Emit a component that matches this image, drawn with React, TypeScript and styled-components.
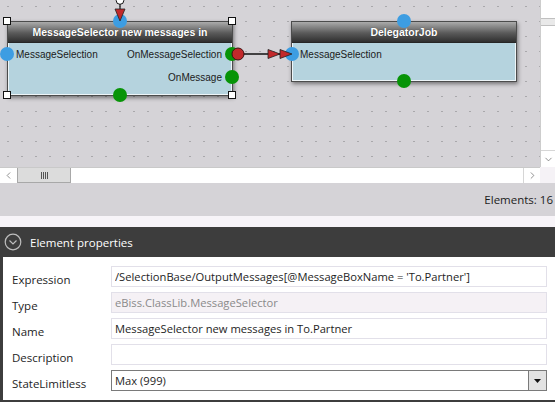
import React from "react";
import styled, { createGlobalStyle } from "styled-components";
import { ChevronDown, ChevronLeft, ChevronRight } from "lucide-react";

const uiFont = `"Open Sans", "Noto Sans", sans-serif`;
const diagramFont = `"Liberation Sans", Arial, sans-serif`;

const GlobalStyle = createGlobalStyle`
  html, body {
    margin: 0;
    padding: 0;
    background: #fff;
  }
  * {
    box-sizing: border-box;
  }
`;

const Page = styled.div`
  width: 555px;
  height: 402px;
  display: flex;
  flex-direction: column;
  overflow: hidden;
  font-family: ${uiFont};
`;

// ---- designer surface ----

const Designer = styled.div`
  display: grid;
  grid-template-columns: 540px 15px;
  grid-template-rows: 167px 16px;
  background: #d5d3d7;
`;

const Canvas = styled.div`
  position: relative;
  overflow: hidden;
  background-color: #d5d3d7;
  background-image: conic-gradient(at 2px 1px, transparent 75%, #a9a8ab 0);
  background-size: 14px 15px;
  background-position: 7px 6px;
`;

const Node = styled.div<{ $x: number; $y: number; $w: number; $h: number }>`
  position: absolute;
  left: ${(p) => p.$x}px;
  top: ${(p) => p.$y}px;
  width: ${(p) => p.$w}px;
  height: ${(p) => p.$h}px;
  display: flex;
  flex-direction: column;
  border: 1px solid #4c4c4c;
  background: #b5d3de;
  box-shadow: 1px 2px 4px rgba(0, 0, 0, 0.45);
`;

const NodeTitle = styled.div`
  flex: none;
  height: 21px;
  display: flex;
  align-items: center;
  justify-content: center;
  background: linear-gradient(#ababab, #5a5a5a 55%, #2f2f2f);
  border-bottom: 1px solid #262626;
  color: #fff;
  font: bold 10.5px ${diagramFont};
  text-shadow: 0 0 1px rgba(0, 0, 0, 0.6);
`;

const NodeBody = styled.div`
  flex: 1;
  display: flex;
  flex-direction: column;
  padding: 0 9px 0 7px;
  border: 1px solid #eef5f8;
  border-top: none;
`;

const PortRow = styled.div<{ $align?: "end" }>`
  height: 23px;
  display: flex;
  align-items: center;
  justify-content: ${(p) => (p.$align === "end" ? "flex-end" : "space-between")};
  font: 10px ${diagramFont};
  color: #1b1b1b;
`;

const Port = styled.div<{ $x: number; $y: number; $color: "blue" | "green" }>`
  position: absolute;
  left: ${(p) => p.$x - 1}px;
  top: ${(p) => p.$y - 1}px;
  width: 14px;
  height: 14px;
  margin: -7px 0 0 -7px;
  border-radius: 50%;
  background: ${(p) => (p.$color === "blue" ? "#3d9de2" : "#079407")};
`;

const Handle = styled.div<{ $x: number; $y: number }>`
  position: absolute;
  left: ${(p) => p.$x - 4}px;
  top: ${(p) => p.$y - 4}px;
  width: 8px;
  height: 8px;
  background: #fff;
  border: 1px solid #111;
  z-index: 3;
`;

const Wires = styled.svg`
  position: absolute;
  left: 0;
  top: 0;
  z-index: 2;
  pointer-events: none;
`;

const VScroll = styled.div`
  display: flex;
  flex-direction: column;
  justify-content: space-between;
  background: #fff;
  border-left: 1px solid #cdcdcd;
`;

const VThumb = styled.div`
  margin-top: 18px;
  height: 8px;
  background: #e9e9e9;
  border-top: 1px solid #c0c0c0;
  border-bottom: 1px solid #c0c0c0;
`;

const ScrollButton = styled.div<{ $edge?: "left" | "top" }>`
  flex: none;
  width: ${(p) => (p.$edge === "top" ? "100%" : "17px")};
  height: ${(p) => (p.$edge === "top" ? "17px" : "100%")};
  display: flex;
  align-items: center;
  justify-content: center;
  color: #606060;
  border-left: ${(p) => (p.$edge === "left" ? "1px solid #d6d6d6" : "none")};
  border-top: ${(p) => (p.$edge === "top" ? "1px solid #d6d6d6" : "none")};
`;

const HScroll = styled.div`
  display: flex;
  background: #fff;
  border-top: 1px solid #c9c9c9;
`;

const HThumb = styled.div`
  flex: none;
  width: 54px;
  display: flex;
  align-items: center;
  justify-content: center;
  background: #dcdcdc;
  border: 1px solid #a8a8a8;
  border-top: none;
`;

const Grip = styled.span`
  width: 7px;
  height: 7px;
  background: repeating-linear-gradient(to right, #555 0 1px, transparent 1px 2px);
`;

const Spacer = styled.div`
  flex: 1;
`;

const Corner = styled.div`
  background: #f5f2f6;
`;

const StatusBar = styled.div`
  height: 33px;
  display: flex;
  align-items: center;
  justify-content: flex-end;
  padding-right: 2px;
  background: #d5d3d7;
  color: #1c1c1c;
  font-size: 11.5px;
`;

const Strip = styled.div`
  height: 11px;
  background: #f7f4f8;
`;

// ---- properties panel ----

const PanelHeader = styled.div`
  height: 30px;
  display: flex;
  align-items: center;
  gap: 8px;
  padding-left: 4px;
  background: #3d3d3d;
  color: #fff;
  font-size: 11.5px;
`;

const PanelBody = styled.div`
  flex: 1;
  display: grid;
  grid-template-columns: 108px 1fr;
  grid-auto-rows: 21px;
  row-gap: 5px;
  align-content: start;
  padding: 9px 8px 0 0;
  background: #fff;
  border-left: 3px solid #3d3d3d;
  border-bottom: 2px solid #3d3d3d;
`;

const Label = styled.div`
  padding: 7px 0 0 9px;
  line-height: 14px;
  font-size: 11.5px;
  color: #1e1e1e;
  white-space: nowrap;
`;

const Field = styled.input<{ $readonly?: boolean }>`
  width: 100%;
  height: 21px;
  margin: 0;
  padding: 0 3px;
  border: 1px solid #e2e0e9;
  outline: none;
  font-family: ${uiFont};
  font-size: 11.2px;
  color: ${(p) => (p.$readonly ? "#8a8a8a" : "#1e1e1e")};
  background: ${(p) => (p.$readonly ? "#f5f1f5" : "#fff")};
`;

const Select = styled.div`
  height: 21px;
  display: flex;
  border: 1px solid #7a7a7a;
  font-size: 11.2px;
  color: #1e1e1e;
`;

const SelectValue = styled.div`
  flex: 1;
  display: flex;
  align-items: center;
  padding-left: 3px;
`;

const SelectButton = styled.div`
  width: 18px;
  display: flex;
  align-items: center;
  justify-content: center;
  background: #e2e2e2;
  border-left: 1px solid #7a7a7a;
`;

const CollapseIcon = () => (
  <svg width="18" height="18" viewBox="0 0 18 18">
    <circle cx="9" cy="9" r="7.8" fill="none" stroke="#bdbdbd" strokeWidth="1.2" />
    <path d="M5.5 7.5 L9 11 L12.5 7.5" fill="none" stroke="#bdbdbd" strokeWidth="1.2" />
  </svg>
);

const DownTriangle = () => (
  <svg width="7" height="4" viewBox="0 0 7 4">
    <path d="M0 0 H7 L3.5 4 Z" fill="#111" />
  </svg>
);

const properties: { label: string; value: string; readonly?: boolean }[] = [
  { label: "Expression", value: "/SelectionBase/OutputMessages[@MessageBoxName = 'To.Partner']" },
  { label: "Type", value: "eBiss.ClassLib.MessageSelector", readonly: true },
  { label: "Name", value: "MessageSelector new messages in To.Partner" },
  { label: "Description", value: "" },
];

const red = "#c2292b";

export default function App() {
  return (
    <Page>
      <GlobalStyle />
      <Designer>
        <Canvas>
          <Node $x={7} $y={21} $w={226} $h={75}>
            <NodeTitle>MessageSelector new messages in</NodeTitle>
            <NodeBody>
              <PortRow>
                <span>MessageSelection</span>
                <span>OnMessageSelection</span>
              </PortRow>
              <PortRow $align="end">
                <span>OnMessage</span>
              </PortRow>
            </NodeBody>
            <Port $x={0} $y={33} $color="blue" />
            <Port $x={113} $y={0} $color="blue" />
            <Port $x={225} $y={33} $color="green" />
            <Port $x={225} $y={56} $color="green" />
            <Port $x={113} $y={74} $color="green" />
          </Node>
          <Handle $x={7} $y={21} />
          <Handle $x={232} $y={21} />
          <Handle $x={7} $y={95} />
          <Handle $x={232} $y={95} />

          <Node $x={291} $y={21} $w={226} $h={61}>
            <NodeTitle>DelegatorJob</NodeTitle>
            <NodeBody>
              <PortRow>
                <span>MessageSelection</span>
              </PortRow>
            </NodeBody>
            <Port $x={113} $y={0} $color="blue" />
            <Port $x={1} $y={33} $color="blue" />
            <Port $x={113} $y={60} $color="green" />
          </Node>

          <Wires width="540" height="167">
            <line x1="120" y1="0" x2="120" y2="12" stroke="#111" strokeWidth="1.2" />
            <circle cx="120" cy="0.5" r="3.8" fill="#fff" stroke="#111" strokeWidth="1" />
            <polygon points="115,9 125,9 120,21" fill={red} stroke="#222" strokeWidth="0.8" />

            <line x1="243" y1="54" x2="286" y2="54" stroke="#111" strokeWidth="1.5" />
            <circle cx="238" cy="54" r="6" fill={red} stroke="#3a1010" strokeWidth="1" />
            <polygon points="268,49.5 268,58.5 280,54" fill={red} stroke="#222" strokeWidth="0.8" />
            <polygon points="280,49.5 280,58.5 292,54" fill={red} stroke="#222" strokeWidth="0.8" />
          </Wires>
        </Canvas>

        <VScroll>
          <VThumb />
          <ScrollButton $edge="top">
            <ChevronDown size={11} strokeWidth={1.5} />
          </ScrollButton>
        </VScroll>

        <HScroll>
          <ScrollButton>
            <ChevronLeft size={11} strokeWidth={1.5} />
          </ScrollButton>
          <HThumb>
            <Grip />
          </HThumb>
          <Spacer />
          <ScrollButton $edge="left">
            <ChevronRight size={11} strokeWidth={1.5} />
          </ScrollButton>
        </HScroll>
        <Corner />
      </Designer>

      <StatusBar>Elements: 16</StatusBar>
      <Strip />

      <PanelHeader>
        <CollapseIcon />
        Element properties
      </PanelHeader>
      <PanelBody>
        {properties.map((p) => (
          <React.Fragment key={p.label}>
            <Label>{p.label}</Label>
            <Field value={p.value} readOnly $readonly={p.readonly} />
          </React.Fragment>
        ))}
        <Label>StateLimitless</Label>
        <Select>
          <SelectValue>Max (999)</SelectValue>
          <SelectButton>
            <DownTriangle />
          </SelectButton>
        </Select>
      </PanelBody>
    </Page>
  );
}
